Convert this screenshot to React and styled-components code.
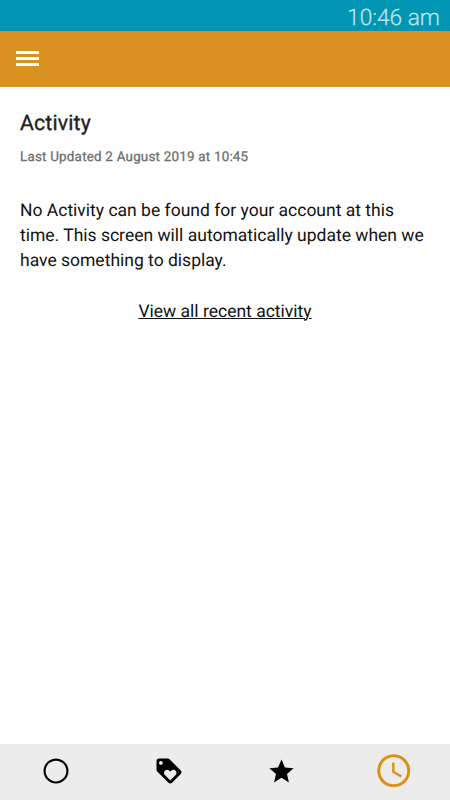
import React from "react";
import styled, { createGlobalStyle } from "styled-components";

const Global = createGlobalStyle`
  * { box-sizing: border-box; }
  body { margin: 0; background: #fff; font-family: Roboto, sans-serif; color: #111; text-rendering: geometricPrecision; }
`;
const Screen = styled.div`
  display: flex; flex-direction: column; width: 450px; height: 800px; background: #fff; overflow: hidden;
`;
const StatusBar = styled.div`
  height: 31px; flex: none; background: #0095b2; color: #c0e4ec;
  display: flex; justify-content: flex-end; align-items: center; padding: 4px 10px 0 0;
  font-size: 22.7px; line-height: 26px; font-weight: 300; white-space: nowrap;
  -webkit-text-stroke: 0.25px currentColor;
`;
const AppBar = styled.header`
  height: 56px; flex: none; background: #d9921f; display: flex; align-items: center; padding-left: 16px;
`;
const MenuButton = styled.button`
  border: 0; padding: 0; background: none; width: 23px; height: 16px;
  display: flex; flex-direction: column; justify-content: flex-start; gap: 3.3px;
`;
const MenuLine = styled.span`
  height: 2.7px; flex: none; width: 23px; background: #fff;
`;
const Content = styled.main`
  flex: 1; padding: 23px 20px 0; display: flex; flex-direction: column;
`;
const Title = styled.h1`
  margin: 0; font-size: 21.3px; line-height: 28px; font-weight: 400; letter-spacing: 0.15px; color: #222; white-space: nowrap;
  -webkit-text-stroke: 0.35px currentColor;
`;
const Updated = styled.p`
  margin: 10px 0 0; font-size: 13.4px; line-height: 20px; font-weight: 400; letter-spacing: 0.22px; color: #707070; white-space: nowrap;
  -webkit-text-stroke: 0.3px currentColor;
`;
const Message = styled.p`
  margin: 31px 0 0; font-size: 17.5px; line-height: 25px; color: #111; white-space: nowrap;
`;
const ActivityLink = styled.a`
  align-self: center; margin-top: 26px; font-size: 17.5px; line-height: 25px; color: #111;
  text-decoration: underline; text-decoration-thickness: 1px;
`;
const TabBar = styled.nav`
  height: 56px; flex: none; background: #ececec; display: grid; grid-template-columns: repeat(4, 1fr);
`;
const Tab = styled.button`
  border: 0; padding: 0 0 2px; background: none; display: grid; place-items: center;
  color: ${(p) => (p.$active ? "#d99215" : "#000")};
`;
const Icon = styled.svg`
  display: block; fill: currentColor; width: ${(p) => p.$size}px; height: ${(p) => p.$size}px;
`;

const tabs = [
  { name: "Home", size: 30, path: "M12 2C6.48 2 2 6.48 2 12s4.48 10 10 10 10-4.48 10-10S17.52 2 12 2zm0 18.3c-4.58 0-8.3-3.72-8.3-8.3s3.72-8.3 8.3-8.3 8.3 3.72 8.3 8.3-3.72 8.3-8.3 8.3z" },
  { name: "Offers", size: 30, path: "M21.41 11.58l-9-9C12.05 2.22 11.55 2 11 2H4c-1.1 0-2 .9-2 2v7c0 .55.22 1.05.59 1.42l9 9c.36.36.86.58 1.41.58.55 0 1.05-.22 1.41-.59l7-7c.37-.36.59-.86.59-1.41 0-.55-.23-1.06-.59-1.42zM5.5 7C4.67 7 4 6.33 4 5.5S4.67 4 5.5 4 7 4.67 7 5.5 6.33 7 5.5 7zm11.77 8.27L13 19.54l-4.27-4.27C8.28 14.81 8 14.19 8 13.5c0-1.38 1.12-2.5 2.5-2.5.69 0 1.32.28 1.77.74l.73.72.73-.73c.45-.45 1.08-.73 1.77-.73 1.38 0 2.5 1.12 2.5 2.5 0 .69-.28 1.32-.73 1.77z" },
  { name: "Favourites", size: 29, path: "M12 17.27L18.18 21l-1.64-7.03L22 9.24l-7.19-.61L12 2 9.19 8.63 2 9.24l5.46 4.73L5.82 21z" },
  { name: "Activity", size: 39.5, active: true, path: "M11.99 2C6.47 2 2 6.48 2 12s4.47 10 9.99 10C17.52 22 22 17.52 22 12S17.52 2 11.99 2zM12 20.2c-4.53 0-8.2-3.67-8.2-8.2s3.67-8.2 8.2-8.2 8.2 3.67 8.2 8.2-3.67 8.2-8.2 8.2zm.5-13.2H11v6l5.25 3.15.75-1.23-4.5-2.67z" },
];

export default function App() {
  return (
    <Screen>
      <Global />
      <StatusBar>10:46 am</StatusBar>
      <AppBar>
        <MenuButton aria-label="Menu"><MenuLine /><MenuLine /><MenuLine /></MenuButton>
      </AppBar>
      <Content>
        <Title>Activity</Title>
        <Updated>Last Updated 2 August 2019 at 10:45</Updated>
        <Message>
          No Activity can be found for your account at this<br />
          time. This screen will automatically update when we<br />
          have something to display.
        </Message>
        <ActivityLink>View all recent activity</ActivityLink>
      </Content>
      <TabBar>
        {tabs.map((t) => (
          <Tab key={t.name} aria-label={t.name} $active={t.active}>
            <Icon viewBox="0 0 24 24" $size={t.size}><path d={t.path} /></Icon>
          </Tab>
        ))}
      </TabBar>
    </Screen>
  );
}
